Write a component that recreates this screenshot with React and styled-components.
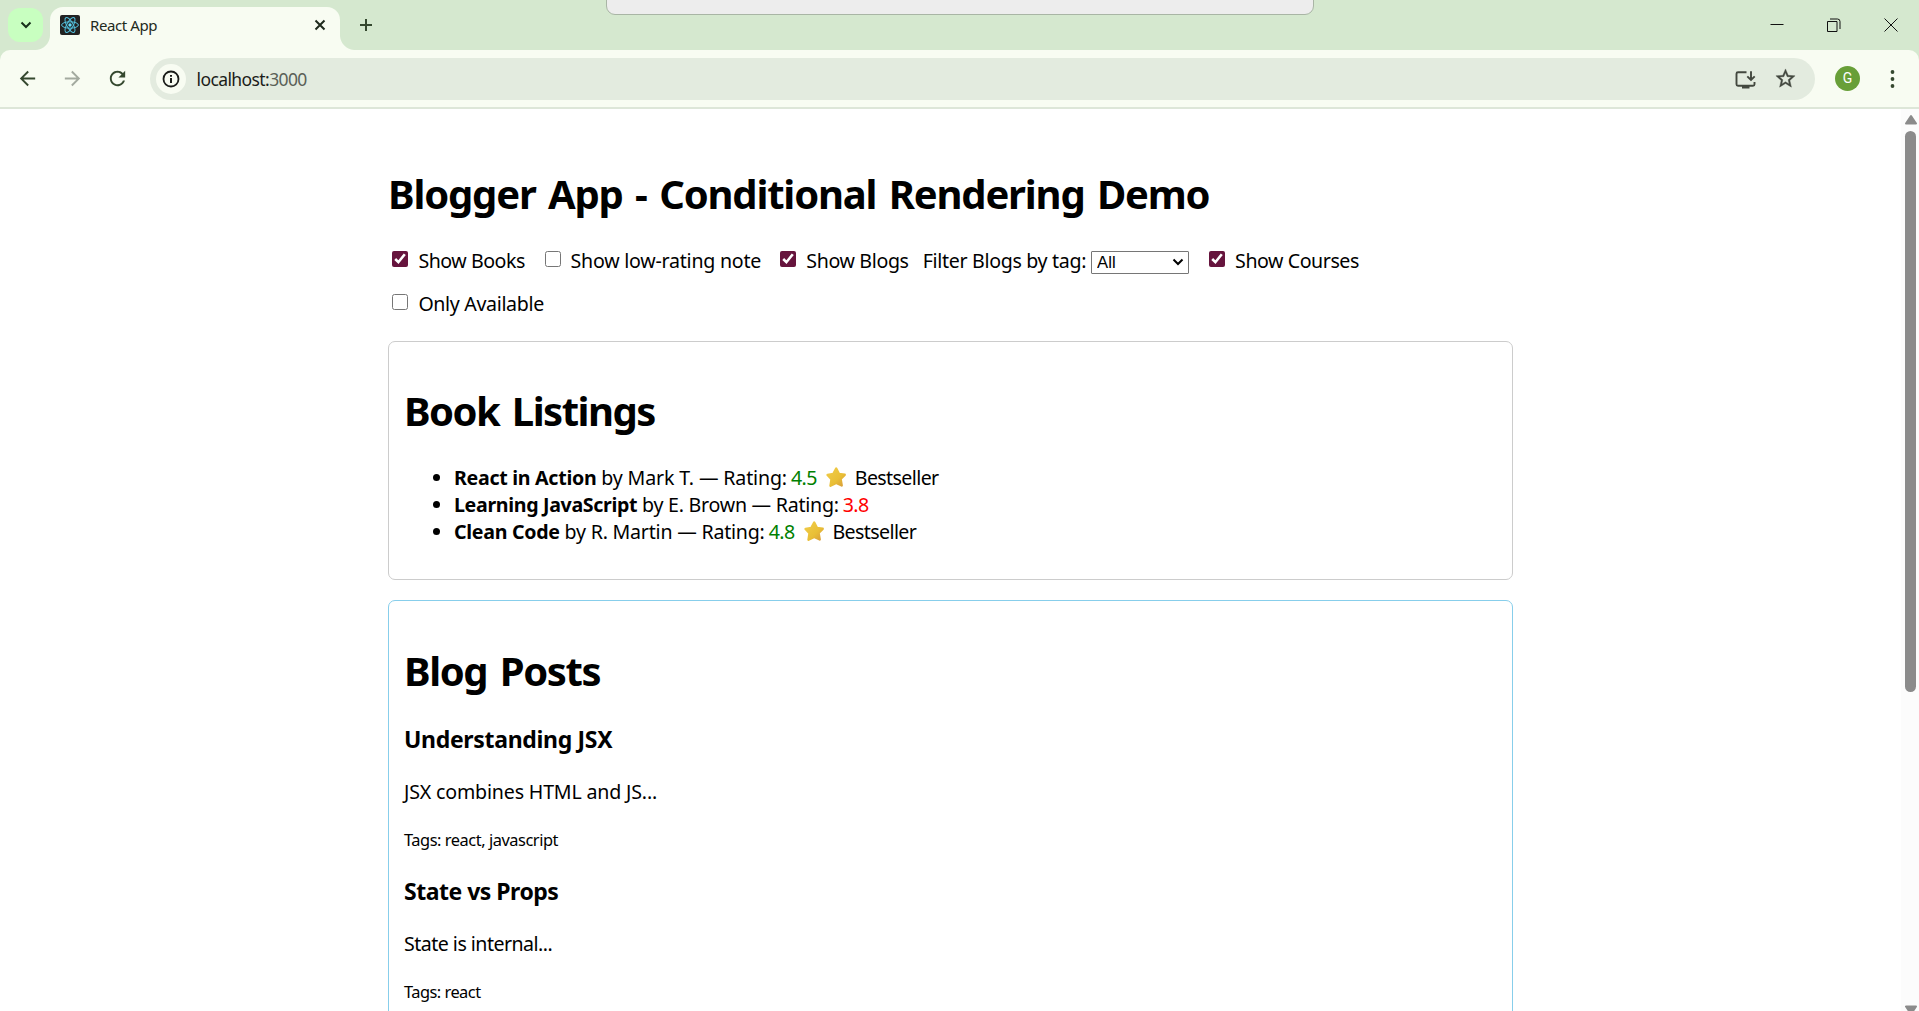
import React from "react";
import styled, { createGlobalStyle } from "styled-components";

const Global = createGlobalStyle`
  *, *::before, *::after { box-sizing: border-box; }
  html, body { margin: 0; padding: 0; height: 1011px; overflow: hidden; background: #fff; }
  body { font-family: "Noto Sans", "Open Sans", sans-serif; color: #000; }
`;

const Window = styled.div`
  display: flex;
  flex-direction: column;
  width: 1919px;
  height: 1011px;
  overflow: hidden;
  position: relative;
`;

const TabStrip = styled.div`
  display: flex;
  height: 50px;
  flex: none;
  padding-left: 8px;
  background: #d5e8cf;
`;

const TabSearch = styled.button`
  display: flex;
  align-items: center;
  justify-content: center;
  width: 35px;
  height: 34px;
  margin: 8px 7px 0 0;
  padding: 0;
  border: 0;
  border-radius: 12px;
  background: #c8ffc0;
`;

const Tab = styled.div`
  position: relative;
  display: flex;
  align-items: center;
  width: 290px;
  height: 43px;
  margin-top: 7px;
  padding: 0 12px 7px 10px;
  border-radius: 13px 13px 0 0;
  background: #f8fcf2;
  &::before, &::after {
    content: "";
    position: absolute;
    bottom: 0;
    width: 15px;
    height: 15px;
  }
  &::before { left: -15px; background: radial-gradient(circle at 0 0, transparent 14.5px, #f8fcf2 15.5px); }
  &::after { right: -15px; background: radial-gradient(circle at 100% 0, transparent 14.5px, #f8fcf2 15.5px); }
`;

const TabTitle = styled.span`
  flex: 1;
  margin-left: 10px;
  font-size: 15px;
  line-height: 20px;
  color: #1f2a1d;
  letter-spacing: -0.4px;
`;

const WindowControls = styled.div`
  display: flex;
  align-items: center;
  margin-left: auto;
  height: 49px;
  gap: 43px;
  padding-right: 21px;
`;

const ToolbarBack = styled.div`
  flex: none;
  background: #d5e8cf;
`;

const Toolbar = styled.div`
  display: flex;
  align-items: center;
  height: 59px;
  padding-left: 16px;
  border-bottom: 2px solid #dde6d8;
  border-radius: 10px 10px 0 0;
  background: #f8fcf2;
`;

const NavIcons = styled.div`
  display: flex;
  gap: 22px;
`;

const Omnibox = styled.div`
  display: flex;
  align-items: center;
  width: 1665px;
  height: 42px;
  margin-left: 21px;
  padding: 0 18px 0 6px;
  border-radius: 21px;
  background: #e3ebdf;
`;

const SiteInfo = styled.span`
  display: flex;
  align-items: center;
  justify-content: center;
  width: 30px;
  height: 30px;
  border-radius: 50%;
  background: #f8fcf2;
`;

const Address = styled.span`
  flex: 1;
  margin-left: 10.5px;
  font-size: 17.5px;
  line-height: 24px;
  color: #1b1d1a;
  letter-spacing: -0.6px;
`;

const Port = styled.span`
  color: #5a6057;
`;

const OmniIcons = styled.div`
  display: flex;
  align-items: center;
  gap: 17px;
`;

const Avatar = styled.span`
  display: flex;
  align-items: center;
  justify-content: center;
  width: 25px;
  height: 25px;
  margin: 0 26px 0 20px;
  border-radius: 50%;
  background: #689f38;
  color: #fff;
  font: 400 14px/25px Roboto, sans-serif;
`;

const SharePill = styled.div`
  position: absolute;
  top: -10px;
  left: 606px;
  width: 708px;
  height: 25px;
  border: 1px solid #a9b5a5;
  border-radius: 9px;
  background: #ededed;
`;

const Viewport = styled.div`
  display: flex;
  flex: 1;
  min-height: 0;
  overflow: hidden;
`;

const Page = styled.main`
  flex: 1;
  min-width: 0;
  padding: 58px 388px 0 388px;
`;

const Title = styled.h1`
  margin: 0;
  font-size: 40px;
  line-height: 54px;
  font-weight: 700;
  white-space: nowrap;
  letter-spacing: ${(p) => p.$track}px;
  word-spacing: ${(p) => p.$space}px;
`;

const Filters = styled.div`
  display: flex;
  flex-wrap: wrap;
  width: 1125px;
  margin-top: 19px;
`;

const Option = styled.label`
  display: flex;
  align-items: flex-start;
  height: 43px;
  margin-right: ${(p) => p.$gap || 0}px;
  padding-top: 8px;
`;

const OptionText = styled.span`
  margin-top: -1px;
  font-size: 19.6px;
  line-height: 27px;
  white-space: nowrap;
  letter-spacing: ${(p) => p.$track}px;
`;

const Check = styled.input`
  width: 16px;
  height: 16px;
  margin: 3px 10px 0 4.4px;
  accent-color: #66143d;
`;

const SelectBox = styled.span`
  position: relative;
  display: flex;
  margin: 3px 0 0 5px;
  svg { position: absolute; right: 5px; top: 7px; }
`;

const Select = styled.select`
  appearance: none;
  width: 98px;
  height: 23px;
  padding: 0 0 0 5px;
  border: 1px solid #767676;
  border-radius: 1px;
  background: #fff;
  color: #000;
  font: 16.67px/20px "Liberation Sans", Arial, sans-serif;
`;

const Card = styled.section`
  width: 1125px;
  height: ${(p) => p.$height}px;
  margin-top: ${(p) => p.$top}px;
  padding: ${(p) => p.$inset}px 15px 0;
  border: 1px solid ${(p) => p.$border};
  border-radius: 7px;
`;

const BookList = styled.ul`
  margin: 26px 0 0;
  padding: 0;
  list-style: none;
`;

const Book = styled.li`
  display: flex;
  align-items: center;
  height: 27px;
  padding-left: 29px;
  font-size: 19.6px;
  line-height: 27px;
  white-space: pre;
  &::before {
    content: "";
    width: 7px;
    height: 7px;
    margin-right: 14px;
    border-radius: 50%;
    background: #000;
  }
`;

const Part = styled.span`
  font-weight: ${(p) => (p.$bold ? 700 : 400)};
  letter-spacing: ${(p) => p.$track}px;
`;

const Rating = styled.span`
  margin-left: 4px;
  color: ${(p) => (p.$high ? "green" : "red")};
  letter-spacing: -0.6px;
`;

const StarIcon = styled.svg`
  flex: none;
  margin: 0 8px 0 9px;
`;

const PostTitle = styled.h3`
  margin: ${(p) => p.$top}px 0 0;
  font-size: 23px;
  line-height: 32px;
  letter-spacing: ${(p) => p.$track}px;
`;

const PostText = styled.p`
  margin: 23px 0 0;
  font-size: 19.6px;
  line-height: 27px;
  letter-spacing: ${(p) => p.$track}px;
`;

const PostTags = styled.p`
  margin: 23px 0 0;
  font-size: 16.4px;
  line-height: 23px;
  letter-spacing: ${(p) => p.$track}px;
`;

const Scrollbar = styled.div`
  display: flex;
  flex-direction: column;
  align-items: center;
  flex: none;
  width: 18px;
  padding: 5px 0 0 1px;
  background: #fcfcfc;
`;

const Thumb = styled.div`
  flex: none;
  width: 11px;
  height: 561px;
  margin: 6px 0 313px;
  border-radius: 6px;
  background: #8b8b8b;
`;

const Icon = styled.svg`
  flex: none;
  display: block;
`;

const NewTabIcon = styled(Icon)`
  margin: 18px 0 0 19px;
`;

const Svg = ({ as: Base = Icon, w, h = w, box, children }) => (
  <Base width={w} height={h} viewBox={box || `0 0 ${w} ${h}`} fill="none">
    {children}
  </Base>
);

const ReactLogo = () => (
  <Svg w={20}>
    <rect width="20" height="20" rx="2" fill="#222" />
    <g stroke="#53c1de" strokeWidth="1">
      <ellipse cx="10" cy="10" rx="8.4" ry="3.2" />
      <ellipse cx="10" cy="10" rx="8.4" ry="3.2" transform="rotate(60 10 10)" />
      <ellipse cx="10" cy="10" rx="8.4" ry="3.2" transform="rotate(120 10 10)" />
    </g>
    <circle cx="10" cy="10" r="1.7" fill="#61dafb" />
  </Svg>
);

const Star = () => (
  <Svg as={StarIcon} w={21}>
    <defs>
      <linearGradient id="gold" x1="0" y1="0" x2="1" y2="1">
        <stop offset="0" stopColor="#f0cc4a" />
        <stop offset="0.6" stopColor="#e9bf36" />
        <stop offset="1" stopColor="#d89c3a" />
      </linearGradient>
    </defs>
    <path
      d="M10.2 1.6 12.9 6.9 18.7 7.8 14.6 12 15.7 18.5 10.2 16 4.5 18.7 5.5 12.2 1.6 7.9 7.4 6.9Z"
      fill="url(#gold)"
      stroke="url(#gold)"
      strokeWidth="2.4"
      strokeLinejoin="round"
    />
  </Svg>
);

const ScrollArrow = ({ down }) => (
  <Svg w={14} h={11}>
    <path
      d={down ? "M2 1.5h10L7 9Z" : "M7 2 12 9.5H2Z"}
      fill="#8b8b8b"
      stroke="#8b8b8b"
      strokeWidth="2"
      strokeLinejoin="round"
    />
  </Svg>
);

const books = [
  { title: "React in Action", by: " by Mark T. — Rating:", rating: "4.5", best: true, tracks: [-0.29, -0.15] },
  { title: "Learning JavaScript", by: " by E. Brown — Rating:", rating: "3.8", best: false, tracks: [-0.33, -0.25] },
  { title: "Clean Code", by: " by R. Martin — Rating:", rating: "4.8", best: true, tracks: [-0.29, -0.22] },
];

const posts = [
  {
    title: "Understanding JSX",
    text: "JSX combines HTML and JS...",
    tags: "Tags: react, javascript",
    top: 25,
    tracks: [-0.32, -0.17, -0.46],
  },
  {
    title: "State vs Props",
    text: "State is internal...",
    tags: "Tags: react",
    top: 24,
    tracks: [-0.5, -0.53, -0.52],
  },
];

const Toggle = ({ label, track, gap, checked }) => (
  <Option $gap={gap}>
    <Check type="checkbox" defaultChecked={checked} />
    <OptionText $track={track}>{label}</OptionText>
  </Option>
);

export default function App() {
  return (
    <>
      <Global />
      <Window>
        <TabStrip>
          <TabSearch>
            <Svg w={12} h={8}>
              <path d="M1.5 1.5 6 6l4.5-4.5" stroke="#17301a" strokeWidth="2" />
            </Svg>
          </TabSearch>
          <Tab>
            <ReactLogo />
            <TabTitle>React App</TabTitle>
            <Svg w={16}>
              <path d="m3.5 3.5 9 9m0-9-9 9" stroke="#1f2a1d" strokeWidth="2" />
            </Svg>
          </Tab>
          <Svg as={NewTabIcon} w={14}>
            <path d="M7 1v12M1 7h12" stroke="#35482f" strokeWidth="2" />
          </Svg>
          <WindowControls>
            <Svg w={14}>
              <path d="M.5 6.5h13" stroke="#111" />
            </Svg>
            <Svg w={14}>
              <path d="M.5 3.5h9.500v10H.5zM3 1h7.500a2.500 2.500 0 0 1 2.500 2.500v7.500" stroke="#111" />
            </Svg>
            <Svg w={14}>
              <path d="m.5.5 13 13m0-13-13 13" stroke="#111" />
            </Svg>
          </WindowControls>
        </TabStrip>
        <ToolbarBack>
          <Toolbar>
            <NavIcons>
              <Svg w={23} box="0 0 24 24">
                <path fill="#35482f" d="M20 11H7.830l5.590-5.590L12 4l-8 8 8 8 1.410-1.410L7.830 13H20v-2z" />
              </Svg>
              <Svg w={23} box="0 0 24 24">
                <path fill="#a3aa9f" d="M12 4l-1.410 1.410L16.170 11H4v2h12.170l-5.580 5.590L12 20l8-8z" />
              </Svg>
              <Svg w={23} box="0 0 24 24">
                <path
                  fill="#35482f"
                  d="M17.650 6.350C16.200 4.900 14.210 4 12 4c-4.420 0-7.990 3.580-7.990 8s3.570 8 7.990 8c3.730 0 6.840-2.550 7.730-6h-2.080c-.82 2.330-3.040 4-5.650 4-3.310 0-6-2.690-6-6s2.690-6 6-6c1.660 0 3.140.69 4.220 1.780L13 11h7V4l-2.350 2.350z"
                />
              </Svg>
            </NavIcons>
            <Omnibox>
              <SiteInfo>
                <Svg w={18}>
                  <circle cx="9" cy="9" r="7.5" stroke="#1b1d1a" strokeWidth="1.8" />
                  <path d="M9 8v5M9 5v1.800" stroke="#1b1d1a" strokeWidth="2" />
                </Svg>
              </SiteInfo>
              <Address>
                localhost:<Port>3000</Port>
              </Address>
              <OmniIcons>
                <Svg w={24}>
                  <path
                    d="M13.500 5.200H5a1.500 1.500 0 0 0-1.500 1.500v10.500A1.500 1.500 0 0 0 5 18.700h15a1.500 1.500 0 0 0 1.500-1.500V15M18 4.200v8.500M14.300 9.300 18 13l3.700-3.700"
                    stroke="#43483f"
                    strokeWidth="1.9"
                  />
                  <path d="M9 18.500h7.500v3H9z" fill="#43483f" />
                </Svg>
                <Svg w={23} box="0 0 24 24">
                  <path
                    fill="#43483f"
                    stroke="#43483f"
                    strokeWidth="0.4"
                    d="M22 9.240l-7.190-.62L12 2 9.190 8.630 2 9.240l5.460 4.730L5.820 21 12 17.270 18.180 21l-1.630-7.030L22 9.240zM12 15.400l-3.760 2.270 1-4.280-3.320-2.880 4.380-.38L12 6.100l1.710 4.040 4.380.38-3.320 2.880 1 4.280L12 15.400z"
                  />
                </Svg>
              </OmniIcons>
            </Omnibox>
            <Avatar>G</Avatar>
            <Svg w={12} h={24}>
              <g fill="#35482f">
                <circle cx="6.5" cy="5" r="1.9" />
                <circle cx="6.5" cy="12" r="1.9" />
                <circle cx="6.5" cy="19" r="1.9" />
              </g>
            </Svg>
          </Toolbar>
        </ToolbarBack>
        <SharePill />
        <Viewport>
          <Page>
            <Title $track={-1.18} $space={3.2}>Blogger App - Conditional Rendering Demo</Title>
            <Filters>
              <Toggle label="Show Books" track={-0.46} gap={15.2} checked />
              <Toggle label="Show low-rating note" track={-0.23} gap={14.8} />
              <Toggle label="Show Blogs" track={-0.36} gap={14} checked />
              <Option $gap={15.6}>
                <OptionText $track={-0.32}>Filter Blogs by tag:</OptionText>
                <SelectBox>
                  <Select defaultValue="All">
                    <option>All</option>
                  </Select>
                  <Svg w={12} h={9}>
                    <path d="m1.500 1.500 4.500 4.500 4.500-4.500" stroke="#000" strokeWidth="2" />
                  </Svg>
                </SelectBox>
              </Option>
              <Toggle label="Show Courses" track={-0.44} checked />
              <Toggle label="Only Available" track={-0.34} />
            </Filters>
            <Card $height={239} $top={15} $inset={42} $border="#ccc">
              <Title $track={-1.5} $space={3.5}>Book Listings</Title>
              <BookList>
                {books.map((b) => (
                  <Book key={b.title}>
                    <Part $bold $track={b.tracks[0]}>{b.title}</Part>
                    <Part $track={b.tracks[1]}>{b.by}</Part>
                    <Rating $high={b.best}>{b.rating}</Rating>
                    {b.best && (
                      <>
                        <Star />
                        <Part $track={-0.62}>Bestseller</Part>
                      </>
                    )}
                  </Book>
                ))}
              </BookList>
            </Card>
            <Card $height={560} $top={20} $inset={43} $border="skyblue">
              <Title $track={-1.4} $space={3.5}>Blog Posts</Title>
              {posts.map((p) => (
                <article key={p.title}>
                  <PostTitle $top={p.top} $track={p.tracks[0]}>{p.title}</PostTitle>
                  <PostText $track={p.tracks[1]}>{p.text}</PostText>
                  <PostTags $track={p.tracks[2]}>{p.tags}</PostTags>
                </article>
              ))}
            </Card>
          </Page>
          <Scrollbar>
            <ScrollArrow />
            <Thumb />
            <ScrollArrow down />
          </Scrollbar>
        </Viewport>
      </Window>
    </>
  );
}
